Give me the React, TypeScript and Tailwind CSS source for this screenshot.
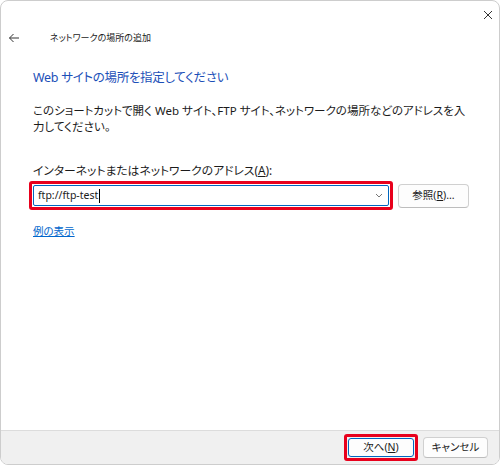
import React from 'react';

const font = "font-['Noto_Sans','Noto_Sans_CJK_JP',sans-serif] [font-feature-settings:'palt']";

function BackArrow() {
  return (
    <svg width="12" height="10" viewBox="0 0 12 10" fill="none" stroke="#333" strokeWidth="1">
      <path d="M11 5H1.5M5.5 1L1.5 5l4 4" />
    </svg>
  );
}

function CloseIcon() {
  return (
    <svg width="10" height="10" viewBox="0 0 10 10" fill="none" stroke="#333" strokeWidth="1">
      <path d="M1 1l8 8M9 1L1 9" />
    </svg>
  );
}

function Chevron() {
  return (
    <svg width="8" height="5" viewBox="0 0 8 5" fill="none" stroke="#777" strokeWidth="1">
      <path d="M1 1l3 3 3-3" />
    </svg>
  );
}

export default function App() {
  return (
    <div className={`w-[500px] h-[465px] bg-white text-[#1b1b1b] ${font}`}>
      <div className="h-full border border-[#cdcdcd] rounded-[8px] overflow-hidden flex flex-col">
        {/* タイトルバー */}
        <div className="h-[26px] flex justify-end items-center pr-[6px] pt-[1px]">
          <CloseIcon />
        </div>

        <div className="flex-1 flex flex-col">
          <div className="h-[22px] flex items-center pl-[7px]">
            <BackArrow />
            <span className="ml-[30px] text-[9px]">ネットワークの場所の追加</span>
          </div>

          <div className="pl-[32px] pr-[20px]">
            <h1 className="mt-[19px] text-[12.5px] tracking-[-0.3px] leading-[20px] text-[#1c4fb8]">
              Web サイトの場所を指定してください
            </h1>

            <p className="mt-[15px] text-[11.5px] leading-[16px] whitespace-nowrap">
              このショートカットで開く Web サイト、FTP サイト、ネットワークの場所などのアドレスを入
              <br />
              力してください。
            </p>

            <div className="mt-[27px] text-[11.8px] leading-[16px]">
              インターネットまたはネットワークのアドレス(<span className="underline">A</span>):
            </div>

            <div className="mt-[3px] flex items-center">
              <div className="-ml-[4px] w-[364px] h-[29px] border-[3px] border-[#e8001c] rounded-[3px] p-[1px]">
                <div className="h-full border border-[#0067c0] rounded-[2px] bg-white flex items-center pl-[4px] pr-[5px]">
                  <span className="text-[10.5px] leading-none">ftp://ftp-test</span>
                  <span className="w-px h-[14px] bg-black ml-[1px]" />
                  <div className="flex-1" />
                  <Chevron />
                </div>
              </div>
              <button className="ml-[5px] w-[71px] h-[24px] border border-[#d0d0d0] border-b-[#bdbdbd] rounded-[4px] bg-[#fdfdfd] text-[10.5px] flex items-center justify-center">
                参照(<span className="underline">R</span>)...
              </button>
            </div>

            <a className="inline-block mt-[13px] text-[10.5px] leading-[16px] text-[#0066cc] underline">
              例の表示
            </a>
          </div>
        </div>

        {/* フッター */}
        <div className="h-[34px] bg-[#f0f0f0] border-t border-[#dcdcdc] flex items-center justify-end pr-[11px]">
          <div className="w-[74px] h-[27px] border-[3px] border-[#e8001c] rounded-[3px] p-px">
            <button className="w-full h-full border border-[#0067c0] rounded-[3px] bg-[#fdfdfd] text-[10.5px] flex items-center justify-center">
              次へ(<span className="underline">N</span>)
            </button>
          </div>
          <button className="ml-[5px] w-[65px] h-[21px] border border-[#d0d0d0] border-b-[#bdbdbd] rounded-[4px] bg-[#fdfdfd] text-[10.5px] flex items-center justify-center">
            キャンセル
          </button>
        </div>
      </div>
    </div>
  );
}
